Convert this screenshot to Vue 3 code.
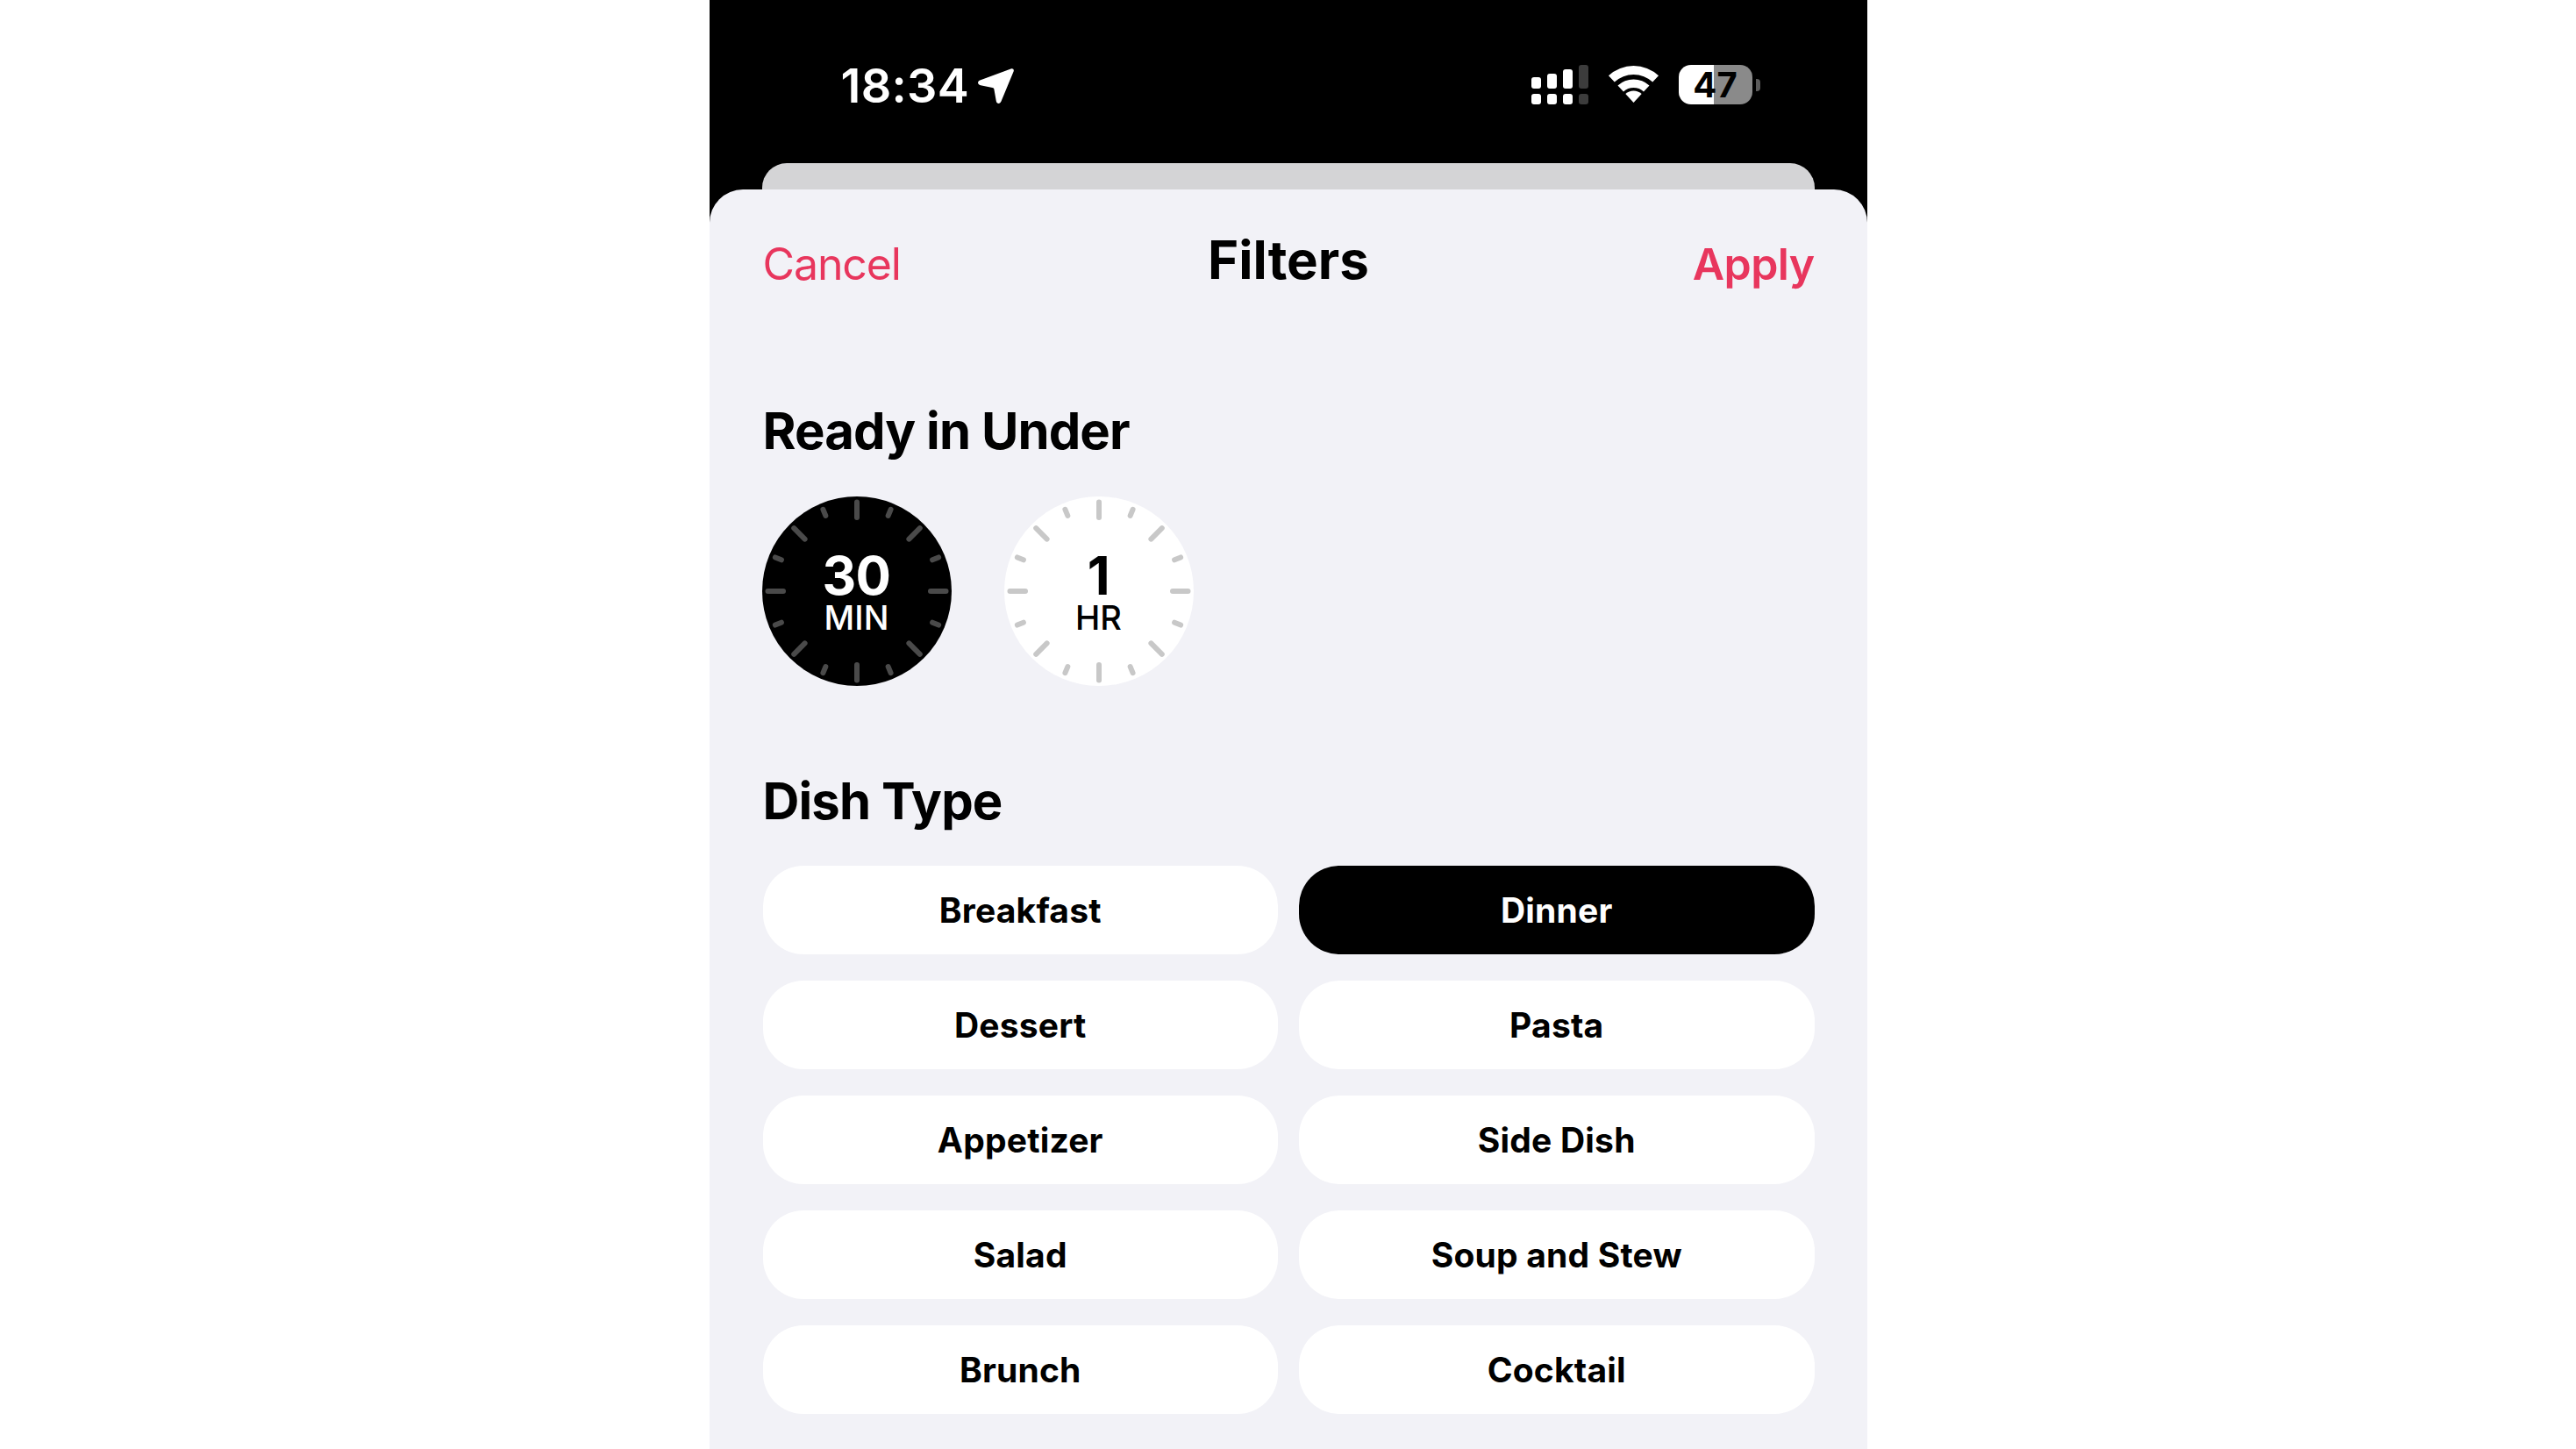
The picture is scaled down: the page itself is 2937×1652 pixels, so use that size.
<script setup>
const buildTicks = () => {
  const list = []
  for (let i = 0; i < 16; i++) {
    const major = i % 2 === 0
    list.push({ angle: i * 22.5, y1: major ? 6.5 : 7.2, y2: major ? 24 : 14.8 })
  }
  return list
}
const ticks = buildTicks()
const timers = [
  { value: '30', unit: 'MIN', active: true },
  { value: '1', unit: 'HR', active: false }
]
const dishes = [
  { name: 'Breakfast' }, { name: 'Dinner', active: true },
  { name: 'Dessert' }, { name: 'Pasta' },
  { name: 'Appetizer' }, { name: 'Side Dish' },
  { name: 'Salad' }, { name: 'Soup and Stew' },
  { name: 'Brunch' }, { name: 'Cocktail' }
]
const signalTop = [
  { h: 13 }, { h: 17 }, { h: 22 }, { h: 27, dim: true }
]
</script>

<template>
  <div class="page">
    <div class="phone">
      <header class="status">
        <div class="clock">
          <span class="time">18:34</span>
          <svg class="arrow" viewBox="0 0 41 40" width="41" height="40">
            <path d="M37.5 0.4 C39.8 -0.5 41.5 1.3 40.6 3.6 L26.5 37.6 C25.2 40.8 21.4 40.6 20.8 37.2 L18.4 23.8 C18.2 22.6 17.6 22.1 16.5 21.9 L3 19.2 C-0.6 18.4 -1 14.8 2.3 13.4 Z" fill="#fff" />
          </svg>
        </div>
        <div class="indicators">
          <div class="signal">
            <div v-for="(bar, i) in signalTop" :key="i" class="signal-col" :class="{ dim: bar.dim }">
              <span class="bar" :style="{ height: bar.h + 'px' }"></span>
              <span class="dot"></span>
            </div>
          </div>
          <svg class="wifi" viewBox="0 0 57 42" width="57" height="42">
            <path d="M0 11.2 A42 42 0 0 1 57 11.2 L50.2 18.5 A32 32 0 0 0 6.8 18.5 Z" fill="#fff" />
            <path d="M10.5 22.6 A26.5 26.5 0 0 1 46.5 22.6 L40 29.5 A17 17 0 0 0 17 29.5 Z" fill="#fff" />
            <path d="M19.3 32.1 A13.5 13.5 0 0 1 37.7 32.1 L28.5 42 Z" fill="#fff" />
          </svg>
          <div class="battery">
            <div class="battery-body">47</div>
            <span class="battery-cap"></span>
          </div>
        </div>
      </header>
      <div class="peek"></div>
      <main class="sheet">
        <nav class="nav">
          <span class="cancel">Cancel</span>
          <h1 class="title">Filters</h1>
          <span class="apply">Apply</span>
        </nav>
        <h2 class="heading ready">Ready in Under</h2>
        <div class="timers">
          <div v-for="t in timers" :key="t.unit" class="timer" :class="{ on: t.active }">
            <svg class="dial" viewBox="0 0 216 216" width="216" height="216">
              <line v-for="tick in ticks" :key="tick.angle" x1="108" x2="108" :y1="tick.y1" :y2="tick.y2"
                :transform="`rotate(${tick.angle} 108 108)`" class="tick" />
            </svg>
            <div class="timer-label">
              <span class="value">{{ t.value }}</span>
              <span class="unit">{{ t.unit }}</span>
            </div>
          </div>
        </div>
        <h2 class="heading dish">Dish Type</h2>
        <div class="grid">
          <button v-for="d in dishes" :key="d.name" class="pill" :class="{ on: d.active }">{{ d.name }}</button>
        </div>
      </main>
    </div>
  </div>
</template>

<style>
html, body { margin: 0; background: #fff; }
</style>

<style scoped>
.page {
  width: 2937px;
  height: 1652px;
  display: flex;
  justify-content: center;
  overflow: hidden;
  background: #fff;
  font-family: Inter, "Liberation Sans", sans-serif;
}
.phone {
  width: 1320px;
  height: 1652px;
  background: #000;
  display: flex;
  flex-direction: column;
}
.status {
  height: 186px;
  flex: none;
  box-sizing: border-box;
  padding: 74px 122px 0 150px;
  display: flex;
  justify-content: space-between;
  align-items: flex-start;
}
.clock {
  display: flex;
  align-items: flex-start;
  gap: 10px;
  color: #fff;
}
.time {
  font-size: 54px;
  font-weight: 600;
  line-height: 48px;
  letter-spacing: 0.3px;
}
.arrow { margin-top: 4px; }
.indicators {
  display: flex;
  align-items: flex-start;
}
.signal {
  display: flex;
  gap: 7px;
  height: 45px;
  align-items: flex-end;
}
.signal-col {
  display: flex;
  flex-direction: column;
  align-items: stretch;
  gap: 6px;
  width: 11px;
}
.bar, .dot {
  display: block;
  background: #fff;
  border-radius: 3px;
}
.dot { height: 12px; }
.signal-col.dim .bar, .signal-col.dim .dot { background: #3c3c3c; }
.wifi { margin: 1px 0 0 23px; }
.battery {
  display: flex;
  align-items: center;
  margin-left: 23px;
}
.battery-body {
  width: 84px;
  height: 45px;
  border-radius: 14px;
  background: linear-gradient(to right, #fff 48%, #8a8a8a 48%);
  color: #000;
  font-size: 40px;
  font-weight: 700;
  line-height: 45px;
  text-align: center;
}
.battery-cap {
  width: 5px;
  height: 14px;
  margin-left: 4px;
  background: #5c5c5c;
  border-radius: 0 4px 4px 0;
}
.peek {
  height: 30px;
  flex: none;
  margin: 0 60px 0 60px;
  background: #d4d4d6;
  border-radius: 28px 28px 0 0;
}
.sheet {
  flex: 1;
  background: #f2f2f7;
  border-radius: 38px 38px 0 0;
  padding: 0 60px 0 61px;
  min-height: 0;
}
.nav {
  display: grid;
  grid-template-columns: 1fr auto 1fr;
  align-items: baseline;
  padding-top: 50px;
}
.cancel, .apply {
  font-size: 50px;
  line-height: 60px;
  color: #e8365d;
  transform: translateY(1px);
}
.cancel { letter-spacing: -1.1px; }
.apply {
  font-weight: 600;
  text-align: right;
  letter-spacing: -0.6px;
}
.title {
  margin: 0;
  font-size: 60px;
  font-weight: 700;
  line-height: 60px;
  color: #000;
}
.heading {
  margin: 0;
  font-size: 58px;
  font-weight: 700;
  line-height: 70px;
  color: #000;
  letter-spacing: -0.9px;
}
.ready { margin-top: 126px; }
.timers {
  display: flex;
  gap: 60px;
  margin: 40px 0 0 -1px;
}
.timer {
  width: 216px;
  height: 216px;
  border-radius: 50%;
  background: #fff;
  color: #000;
  display: grid;
}
.timer.on {
  background: #000;
  color: #fff;
}
.dial, .timer-label { grid-area: 1 / 1; }
.tick {
  stroke: #c8c8c8;
  stroke-width: 6;
  stroke-linecap: round;
}
.timer.on .tick { stroke: #4a4a4a; }
.timer-label {
  display: flex;
  flex-direction: column;
  align-items: center;
  justify-content: center;
}
.value {
  font-size: 60px;
  font-weight: 700;
  line-height: 60px;
  letter-spacing: -0.5px;
}
.unit {
  font-size: 38px;
  font-weight: 500;
  line-height: 36px;
}
.dish { margin-top: 96px; }
.grid {
  display: grid;
  grid-template-columns: 1fr 1fr;
  gap: 30px 24px;
  margin-top: 39px;
}
.pill {
  height: 101px;
  border: 0;
  padding: 0;
  border-radius: 46px;
  background: #fff;
  color: #000;
  font-family: inherit;
  font-size: 39px;
  font-weight: 700;
  letter-spacing: 0.2px;
}
.pill.on {
  background: #000;
  color: #fff;
}
</style>
